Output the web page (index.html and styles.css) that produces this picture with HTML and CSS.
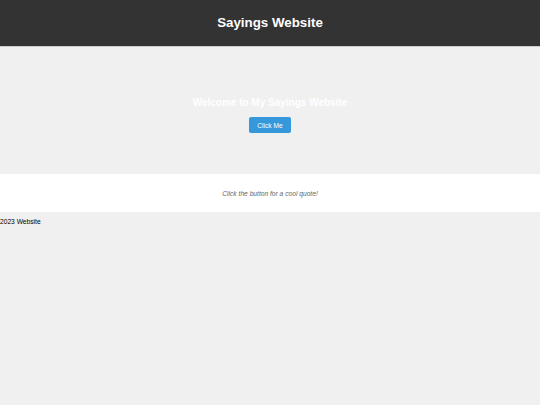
FILE: index.html
```html
<!DOCTYPE html>
<html lang="en">
<head>
<meta charset="utf-8">
<title>Sayings Website</title>
<link rel="stylesheet" href="styles.css">
</head>
<body>
<header class="site-header">
  <h1 class="site-title">Sayings Website</h1>
</header>
<section class="hero">
  <h2 class="hero-title">Welcome to My Sayings Website</h2>
  <button class="hero-button" type="button">Click Me</button>
</section>
<section class="quote">
  <p class="quote-text">Click the button for a cool quote!</p>
</section>
<footer class="site-footer">
  <p class="footer-text">2023 Website</p>
</footer>
</body>
</html>
```
FILE: styles.css
```css
html, body {
  margin: 0;
  padding: 0;
}
body {
  background: #f0f0f0;
  font-family: "Liberation Sans", Arial, sans-serif;
  font-size: 6.667px;
  color: #000;
}
.site-header {
  background: #333;
  height: 46px;
  display: flex;
  align-items: center;
  justify-content: center;
  border-bottom: 1px solid #ccc;
}
.site-title {
  margin: 0;
  color: #fff;
  font-size: 13.333px;
  font-weight: bold;
  line-height: 16px;
}
.hero {
  background: #f0f0f0;
  height: 127px;
  box-sizing: border-box;
  padding-top: 50px;
  display: flex;
  flex-direction: column;
  align-items: center;
}
.hero-title {
  margin: 0 0 8px;
  color: #fff;
  font-size: 10px;
  font-weight: bold;
  line-height: 12px;
}
.hero-button {
  height: 16px;
  padding: 0 8.7px;
  border: none;
  border-radius: 2px;
  background: #3498db;
  color: #fff;
  font-family: inherit;
  font-size: 6.667px;
  cursor: pointer;
}
.quote {
  background: #fff;
  height: 38px;
  display: flex;
  align-items: center;
  justify-content: center;
}
.quote-text {
  margin: 0;
  color: #666;
  font-style: italic;
  font-size: 6.667px;
}
.site-footer {
  padding-top: 6px;
}
.footer-text {
  margin: 0;
  line-height: 8px;
}
```
